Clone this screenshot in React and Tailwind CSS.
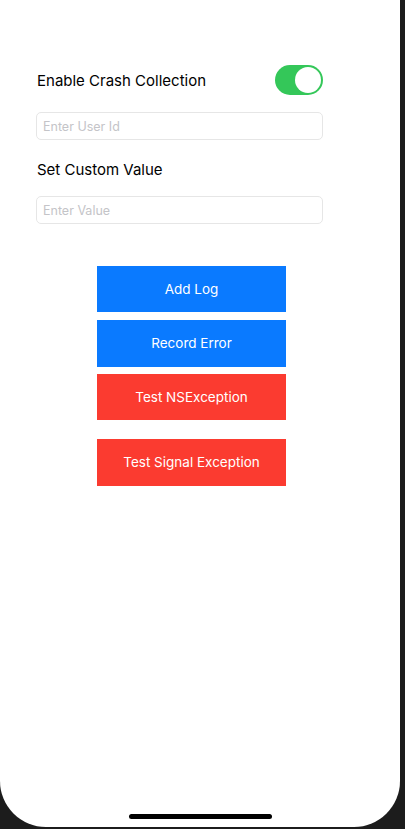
import React, { useState } from 'react';

const font = { fontFamily: '"Inter", "Liberation Sans", sans-serif' };

const ActionButton = ({ label, color, className = '' }) => (
  <button
    className={`w-[189px] h-[46px] flex items-center justify-center text-white text-[13.5px] ${color} ${className}`}
  >
    {label}
  </button>
);

export default function App() {
  const [enabled, setEnabled] = useState(true);

  return (
    <div className="w-[405px] h-[829px] bg-[#1c1c1c] overflow-hidden" style={font}>
      <div className="relative w-[400px] h-[827px] bg-white rounded-bl-[46px] rounded-br-[46px] flex flex-col">
        <div className="pt-[66px] px-[36px] w-[359px]">
          <div className="flex items-center justify-between h-[30px]">
            <span className="pl-[1px] text-[15px] text-black">Enable Crash Collection</span>
            <button
              onClick={() => setEnabled(!enabled)}
              className={`-mt-[2px] w-[48px] h-[30px] rounded-full p-[2px] flex ${enabled ? 'bg-[#34c759] justify-end' : 'bg-[#e9e9eb] justify-start'}`}
            >
              <span className="w-[26px] h-[26px] rounded-full bg-white" />
            </button>
          </div>

          <input
            placeholder="Enter User Id"
            className="mt-[16px] w-full h-[28px] rounded-[5px] border border-[#e6e6e6] px-[6px] text-[12.5px] placeholder:text-[#c4c4c8] outline-none"
          />

          <div className="mt-[19px] pl-[1px] text-[15px] text-black h-[22px] leading-[22px]">Set Custom Value</div>

          <input
            placeholder="Enter Value"
            className="mt-[15px] w-full h-[28px] rounded-[5px] border border-[#e6e6e6] px-[6px] text-[12.5px] placeholder:text-[#c4c4c8] outline-none"
          />
        </div>

        <div className="mt-[42px] ml-[97px] flex flex-col items-start">
          <ActionButton label="Add Log" color="bg-[#0a7aff]" />
          <ActionButton label="Record Error" color="bg-[#0a7aff]" className="mt-[8px] h-[47px]" />
          <ActionButton label="Test NSException" color="bg-[#fb3b30]" className="mt-[7px]" />
          <ActionButton label="Test Signal Exception" color="bg-[#fb3b30]" className="mt-[19px] h-[47px]" />
        </div>

        <div className="mt-auto mb-[8px] flex justify-center">
          <div className="w-[143px] h-[5px] rounded-full bg-black" />
        </div>
      </div>
    </div>
  );
}
